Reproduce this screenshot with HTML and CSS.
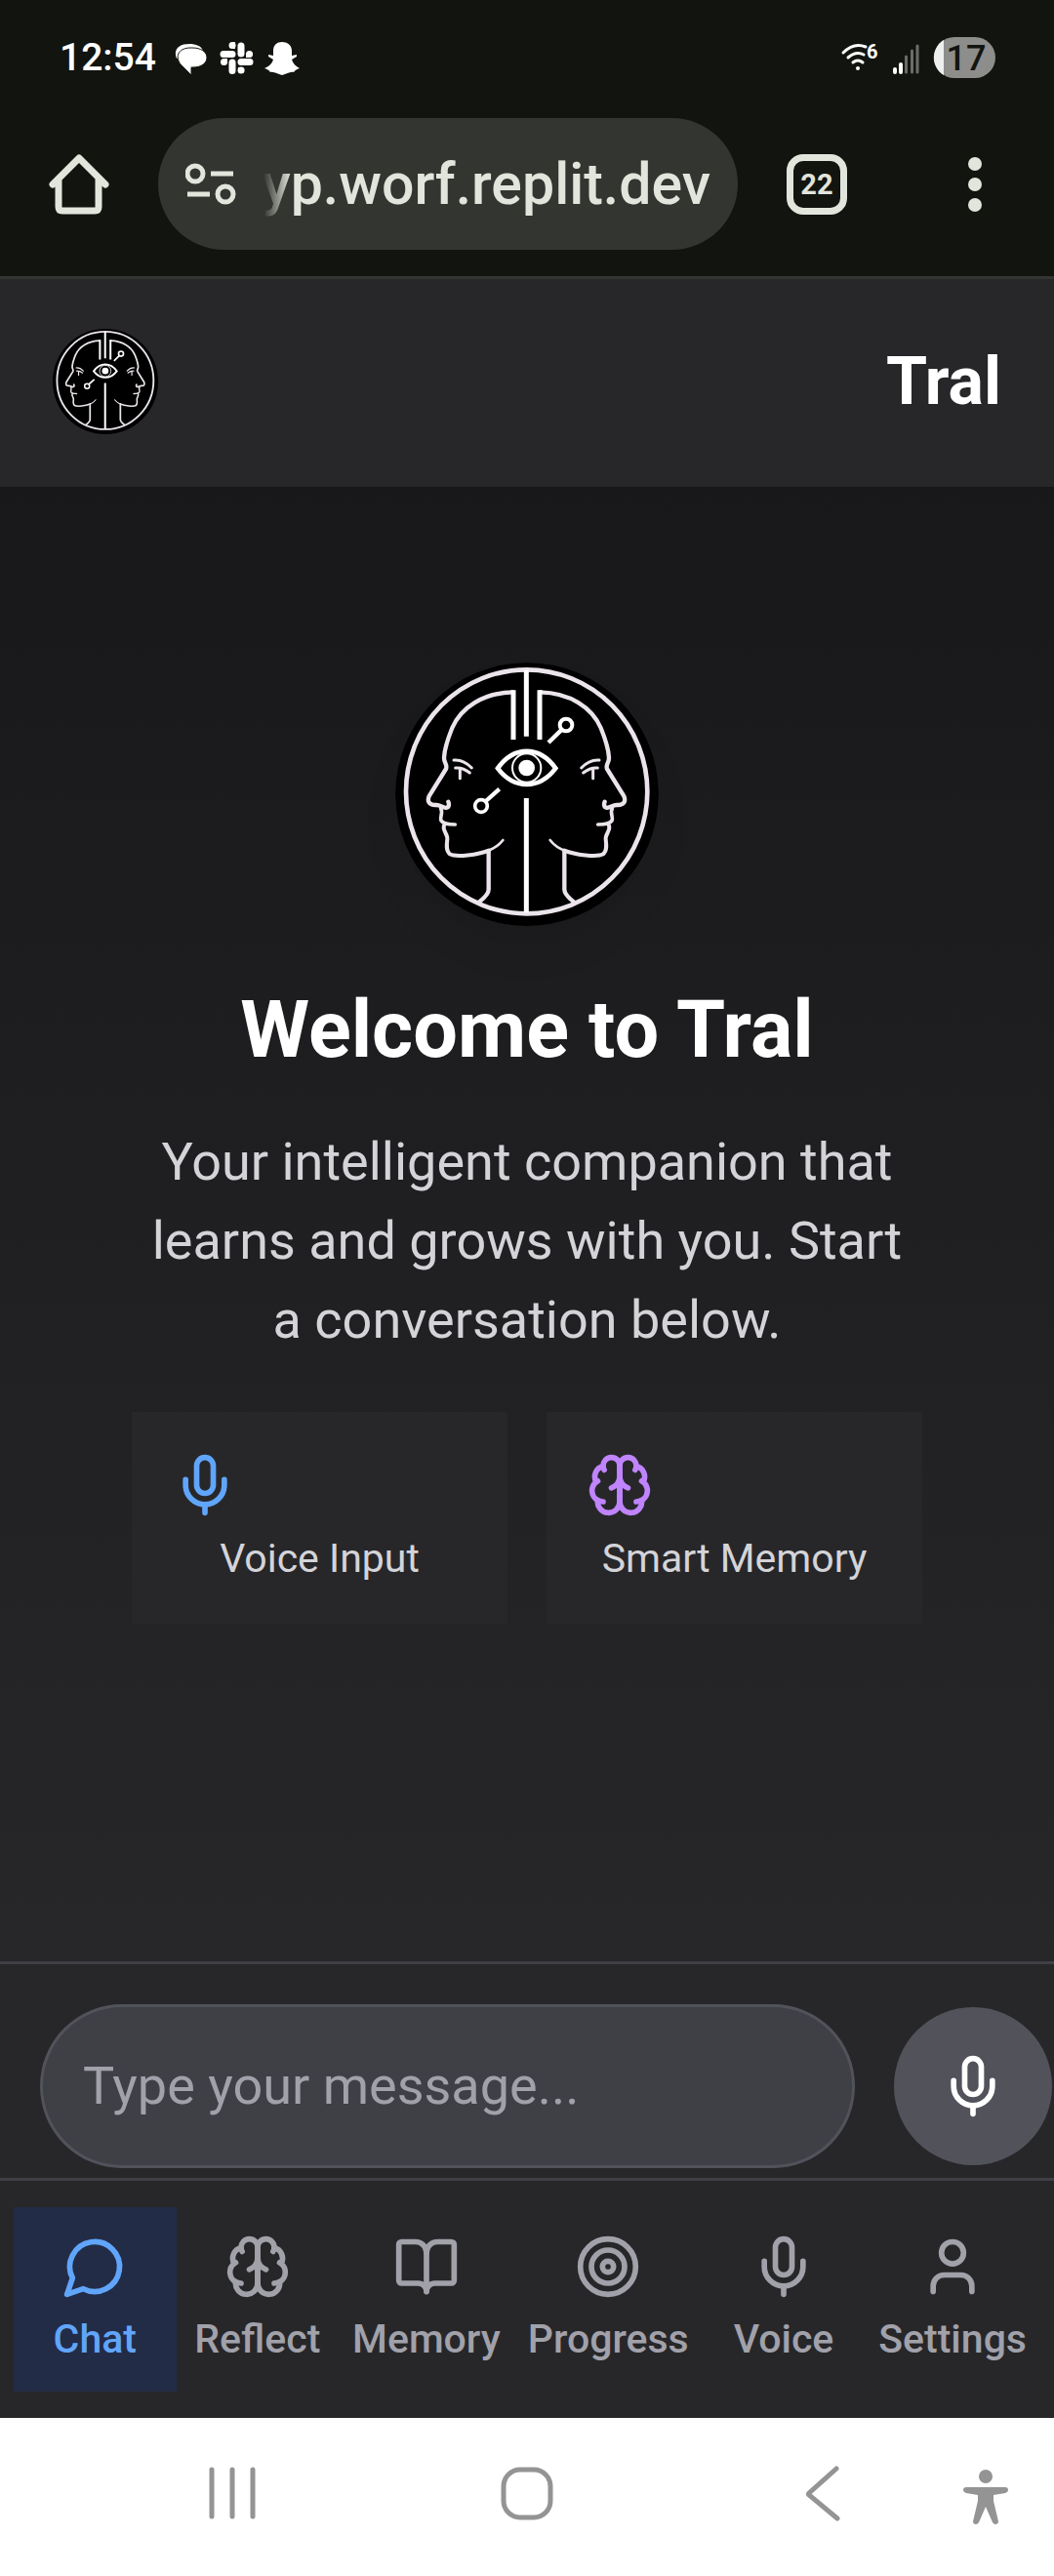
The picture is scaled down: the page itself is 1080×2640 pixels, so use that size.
FILE: index.html
```html
<!DOCTYPE html>
<html lang="en">
<head>
<meta charset="utf-8">
<meta name="viewport" content="width=device-width">
<title>Tral</title>
<link rel="stylesheet" href="styles.css">
</head>
<body>
<svg class="defs" aria-hidden="true">
  <symbol id="mic" viewBox="0 0 24 24">
    <path d="M12 2a3 3 0 0 0-3 3v7a3 3 0 0 0 6 0V5a3 3 0 0 0-3-3Z"/><path d="M19 10v2a7 7 0 0 1-14 0v-2"/><path d="M12 19v3"/>
  </symbol>
  <symbol id="brain" viewBox="0 0 24 24">
    <path d="M12 5a3 3 0 1 0-5.997.125 4 4 0 0 0-2.526 5.77 4 4 0 0 0 .556 6.588A4 4 0 1 0 12 18Z"/>
    <path d="M12 5a3 3 0 1 1 5.997.125 4 4 0 0 1 2.526 5.77 4 4 0 0 1-.556 6.588A4 4 0 1 1 12 18Z"/>
    <path d="M15 13a4.5 4.5 0 0 1-3-4 4.5 4.5 0 0 1-3 4"/><path d="M17.599 6.5a3 3 0 0 0 .399-1.375"/><path d="M6.003 5.125A3 3 0 0 0 6.401 6.5"/><path d="M3.477 10.896a4 4 0 0 1 .585-.396"/><path d="M19.938 10.5a4 4 0 0 1 .585.396"/><path d="M6 18a4 4 0 0 1-1.967-.516"/><path d="M19.967 17.484A4 4 0 0 1 18 18"/>
  </symbol>
  <symbol id="half-face" viewBox="75 57 810 810" overflow="visible">
    <path stroke-width="13" d="M437 148C345 150 277 195 250 258C235 295 226 325 225 350C225 366 236 370 231 384L180 466C171 484 180 496 200 495C214 494 222 506 233 503C241 501 241 492 238 485"/>
    <path stroke-width="11" d="M215 506C223 520 211 530 216 543C222 553 236 555 259 555"/>
    <path stroke-width="12" d="M226 556C217 570 237 585 235 600C233 615 230 636 243 646C262 657 330 648 362 635"/>
    <path stroke-width="8" d="M355 638C382 628 398 614 406 603"/>
    <path stroke-width="13" d="M362 637V755Q362 770 332 794"/>
    <path stroke-width="9" d="M255 357C277 355 296 366 310 381M260 381C276 379 290 385 304 396M274 384V413"/>
  </symbol>
  <symbol id="logo" viewBox="75 57 810 810">
    <circle cx="480" cy="462" r="405" fill="#000"/>
    <g fill="none" stroke="#ebe5eb" stroke-linecap="round" stroke-linejoin="round">
      <ellipse cx="479" cy="454" rx="371" ry="375" stroke-width="14"/>
      <use href="#half-face" x="75" y="57" width="810" height="810"/>
      <g transform="translate(957 0) scale(-1 1)"><use href="#half-face" x="75" y="57" width="810" height="810"/></g>
    </g>
    <g fill="none" stroke="#fff">
      <path stroke-width="15" d="M478 80V284M478 474V826M438 142V294M519 142V294"/>
      <path stroke-width="13" d="M588 262L546 303M350 486L395 446"/>
      <circle cx="600" cy="249" r="19" stroke-width="12"/><circle cx="339" cy="498" r="19" stroke-width="11"/>
      <path stroke-width="14" d="M390 382C440 312 518 312 568 382C518 448 440 448 390 382Z"/>
      <circle cx="479" cy="381" r="44" stroke-width="6"/><circle cx="479" cy="381" r="25" fill="#fff" stroke="none"/>
    </g>
  </symbol>
</svg>
<div class="screen">
  <div class="chrome">
    <div class="status">
      <span class="clock">12:54</span>
      <svg class="notes" viewBox="178 40 132 38" aria-hidden="true">
        <g fill="#fff">
          <path d="M181 60C177 50 184 45 194 45C201 45 206 47 208 52Z"/>
          <path stroke="#12140f" d="M195 49h2C206 49 212 53 212 59C212 65 206 69 198 69H196V77L185 66C178 56 185 49 195 49Z"/>
          <path d="M307 70C304 71 302 72 301 74C297 73 294 76 289 77C284 76 281 73 277 74C276 72 274 71 271 70C276 68 279 65 280 61L275 58V56L280 57V52C280 46 284 43 289 43S299 46 299 52V57L304 56V58L299 61C300 65 303 68 307 70Z"/>
        </g>
        <g stroke="#fff" stroke-width="7" stroke-linecap="round">
          <path d="M247 47V55M229 55.500H238M238 64V72.500M247 63.500H256"/>
          <path d="M238 46.500h.1M255.500 55.500h.1M247 72h.1M229.500 63.500h.1"/>
        </g>
        <path d="M238 43H241V50H238ZM252 55H259L256 59H252ZM244 69H248L244 73ZM229 60H233V64Z" fill="#fff"/>
      </svg>
      <svg class="signal" viewBox="860 34 162 48" role="img" aria-label="Wi-Fi, signal">
        <g fill="none" stroke="#fff" stroke-width="3" stroke-linecap="round">
          <path d="M864 53Q875 42 887 47M869 58Q877 51 885 55M874 63Q879 59 884 63"/>
        </g>
        <circle cx="879" cy="69" r="2" fill="#fff"/>
        <text x="888" y="59" class="wifi-gen">6</text>
        <g stroke-width="4" stroke-linecap="round"><path stroke="#fff" d="M917 70V73M923 65V73"/><path stroke="#6c6d69" stroke-width="3" d="M928.500 57V73M934.500 51V73M940 46V73"/></g>
        <path fill="#8d8d8b" d="M978 37H999A21 21 0 0 1 999 79H978A21 21 0 0 1 978 37Z"/>
        <path fill="#eee" d="M967 40V76A21 21 0 0 1 967 40Z"/>
        <text x="990" y="71" text-anchor="middle" class="battery">17</text>
      </svg>
    </div>
    <div class="toolbar">
      <button class="tool" aria-label="Home">
        <svg viewBox="0 0 62 62" width="62" height="62" fill="none" stroke="#e2e5dc" stroke-width="7" stroke-linecap="round" stroke-linejoin="round"><path d="M4 31L31 4L58 31M10 26V54Q10 58 14 58H47Q51 58 51 54V26"/></svg>
      </button>
      <div class="address">
        <svg viewBox="190 167 52 44" width="52" height="44" fill="none" stroke="#e2e5dc" stroke-width="5" aria-hidden="true"><circle cx="200" cy="178" r="8"/><circle cx="231" cy="199" r="8"/><path d="M216 178H239M192 199H215"/></svg>
        <input class="url" type="text" value="yp.worf.replit.dev" aria-label="Address">
      </div>
      <button class="tool tabs" aria-label="Tabs">22</button>
      <button class="tool menu" aria-label="Menu">
        <svg viewBox="0 0 16 62" width="16" height="62" fill="#e2e5dc"><circle cx="8" cy="10" r="7"/><circle cx="8" cy="31" r="7"/><circle cx="8" cy="52" r="7"/></svg>
      </button>
    </div>
  </div>

  <header class="app-bar">
    <svg class="logo-small" role="img" aria-label="Tral logo"><use href="#logo"/></svg>
    <span class="brand">Tral</span>
  </header>

  <main class="welcome">
    <svg class="logo-large" role="img" aria-label="Tral logo"><use href="#logo"/></svg>
    <h1>Welcome to Tral</h1>
    <p class="intro">Your intelligent companion that learns and grows with you. Start a conversation below.</p>
    <div class="cards">
      <div class="card"><svg class="icon blue"><use href="#mic"/></svg><span>Voice Input</span></div>
      <div class="card"><svg class="icon purple"><use href="#brain"/></svg><span>Smart Memory</span></div>
    </div>
  </main>

  <form class="composer">
    <input class="message" type="text" placeholder="Type your message..." aria-label="Message">
    <button class="record" type="button" aria-label="Record"><svg class="icon"><use href="#mic"/></svg></button>
  </form>

  <nav class="nav">
    <a class="item active" href="#chat"><svg class="icon" viewBox="0 0 24 24"><path d="M7.900 20A9 9 0 1 0 4 16.100L2 22Z"/></svg>Chat</a>
    <a class="item" href="#reflect"><svg class="icon"><use href="#brain"/></svg>Reflect</a>
    <a class="item" href="#memory"><svg class="icon" viewBox="0 0 24 24"><path d="M12 7v14"/><path d="M3 18a1 1 0 0 1-1-1V4a1 1 0 0 1 1-1h5a4 4 0 0 1 4 4 4 4 0 0 1 4-4h5a1 1 0 0 1 1 1v13a1 1 0 0 1-1 1h-6a3 3 0 0 0-3 3 3 3 0 0 0-3-3z"/></svg>Memory</a>
    <a class="item" href="#progress"><svg class="icon" viewBox="0 0 24 24"><circle cx="12" cy="12" r="10"/><circle cx="12" cy="12" r="6"/><circle cx="12" cy="12" r="2"/></svg>Progress</a>
    <a class="item" href="#voice"><svg class="icon"><use href="#mic"/></svg>Voice</a>
    <a class="item" href="#settings"><svg class="icon" viewBox="0 0 24 24"><path d="M19 21v-2a4 4 0 0 0-4-4H9a4 4 0 0 0-4 4v2"/><circle cx="12" cy="7" r="4"/></svg>Settings</a>
  </nav>

  <div class="system">
    <button class="sys recents" aria-label="Recent apps"><svg viewBox="0 0 60 60"><path d="M9 6V54M30 6V54M51 6V54"/></svg></button>
    <button class="sys home" aria-label="Home"><svg viewBox="0 0 60 60"><rect x="6" y="6" width="48" height="49" rx="17"/></svg></button>
    <button class="sys back" aria-label="Back"><svg viewBox="0 0 60 60"><path d="M45 5L17 30Q16 31 17 32L46 56"/></svg></button>
    <button class="sys person" aria-label="Accessibility"><svg viewBox="0 0 60 60"><g fill="#949494" stroke="none"><circle cx="30" cy="13" r="7"/><path d="M10 24H50Q53 24 53 27Q53 29 50 30L38 32V38L43 59Q43 62 40 62Q38 62 37 60L30 44L23 60Q22 62 20 62Q17 62 17 59L22 38V32L10 30Q7 29 7 27Q7 24 10 24Z"/></g></svg></button>
  </div>
</div>
</body>
</html>
```

FILE: styles.css
```css
* {
  box-sizing: border-box;
}

body {
  margin: 0;
  font-family: Roboto, "Liberation Sans", sans-serif;
  background: #27272a;
}

button,
input {
  font: inherit;
  border: 0;
  padding: 0;
  background: none;
}

svg {
  display: block;
  flex: none;
}

.defs {
  position: absolute;
  width: 0;
  height: 0;
}

.screen {
  display: flex;
  flex-direction: column;
  min-height: 100vh;
}

/* Browser chrome */
.chrome {
  background: #12140f;
  border-bottom: 3px solid #333530;
  padding-bottom: 27px;
}

.status {
  display: flex;
  align-items: center;
  height: 121px;
  padding: 0 58px 4px 61px;
  color: #fff;
}

.clock {
  font-size: 39px;
  font-weight: 500;
  width: 117px;
}

.notes {
  width: 132px;
  height: 38px;
}

.signal {
  width: 162px;
  height: 48px;
  margin-left: auto;
}

.wifi-gen {
  font-size: 20px;
  font-weight: 700;
  fill: #fff;
}

.battery {
  font-size: 36px;
  font-weight: 500;
  fill: #12140f;
}

.toolbar {
  display: flex;
  align-items: center;
  gap: 50px;
  padding: 0 50px;
}

.tool {
  display: grid;
  place-items: center;
  flex: none;
  width: 62px;
  height: 62px;
  color: #e2e5dc;
}

.address {
  display: flex;
  align-items: center;
  gap: 16px;
  flex: 1;
  min-width: 0;
  height: 135px;
  padding: 0 28px;
  border-radius: 68px;
  background: #333530;
}

.url {
  flex: 1;
  min-width: 0;
  height: 81px;
  font-size: 59px;
  font-weight: 500;
  text-align: right;
  color: #e2e5dc;
  mask-image: linear-gradient(to right, transparent 12px, #000 40px);
}

.tabs {
  margin-right: 50px;
  border: 7px solid #e2e5dc;
  border-radius: 17px;
  font-size: 29px;
  font-weight: 700;
}

/* App */
.app-bar {
  display: flex;
  align-items: center;
  justify-content: space-between;
  padding: 51px 54px 54px;
  background: #27272a;
  color: #fff;
}

.logo-small {
  width: 108px;
  height: 108px;
}

.brand {
  font-size: 68px;
  line-height: 81px;
  font-weight: 700;
}

.welcome {
  flex: 1;
  display: flex;
  flex-direction: column;
  align-items: center;
  padding: 180px 135px 54px;
  background: linear-gradient(#18181b, #27272a);
  text-align: center;
}

.logo-large {
  width: 270px;
  height: 270px;
  border-radius: 50%;
  box-shadow: 0 27px 40px rgba(0, 0, 0, 0.06);
}

h1 {
  margin: 53px 0 40px;
  font-size: 81px;
  line-height: 108px;
  font-weight: 700;
  color: #fff;
}

.intro {
  margin: 0 0 54px;
  padding: 0 14px;
  font-size: 54px;
  line-height: 81px;
  color: #d4d4d8;
}

.cards {
  display: grid;
  grid-template-columns: 1fr 1fr;
  gap: 40px;
  width: 100%;
}

.card {
  display: flex;
  flex-direction: column;
  gap: 14px;
  padding: 41px 41px 40px;
  background: #27272a;
  font-size: 41px;
  line-height: 54px;
  color: #d4d4d8;
  white-space: nowrap;
}

.icon {
  width: 68px;
  height: 68px;
  fill: none;
  stroke: currentColor;
  stroke-width: 2;
  stroke-linecap: round;
  stroke-linejoin: round;
}

.blue {
  color: #60a5fa;
}

.purple {
  color: #c084fc;
}

.composer {
  display: flex;
  align-items: center;
  gap: 40px;
  padding: 41px 2px 10px 41px;
  border-top: 3px solid #3f3f46;
  background: #27272a;
}

.message {
  flex: 1;
  min-width: 0;
  height: 168px;
  padding: 0 41px 2px;
  border: 3px solid #52525b;
  border-radius: 84px;
  background: #3f3f46;
  font-size: 54px;
  color: #fff;
}

.message::placeholder {
  color: #a1a1aa;
  opacity: 1;
}

.record {
  display: grid;
  place-items: center;
  flex: none;
  width: 162px;
  height: 162px;
  border-radius: 50%;
  background: #52525b;
  color: #fff;
}

.nav {
  display: flex;
  padding: 27px 14px;
  border-top: 3px solid #3f3f46;
  background: #27272a;
}

.item {
  flex: 1;
  display: flex;
  flex-direction: column;
  align-items: center;
  gap: 13px;
  padding: 27px 14px;
  font-size: 41px;
  line-height: 54px;
  font-weight: 500;
  color: #a1a1aa;
  text-decoration: none;
}

.active {
  background: #232c47;
  color: #60a5fa;
}

/* System navigation */
.system {
  display: grid;
  grid-template-columns: 118fr 240fr 62fr 240fr 62fr 240fr 96fr 22fr;
  align-items: center;
  height: 162px;
  padding-bottom: 8px;
  background: #fff;
}

.sys {
  display: grid;
  place-items: center;
  grid-row: 1;
}

.sys svg {
  width: 60px;
  height: 60px;
  overflow: visible;
  fill: none;
  stroke: #949494;
  stroke-width: 5;
  stroke-linecap: round;
}

.recents {
  grid-column: 2;
}

.home {
  grid-column: 4;
}

.back {
  grid-column: 6;
}

.person {
  grid-column: 7;
}
```
